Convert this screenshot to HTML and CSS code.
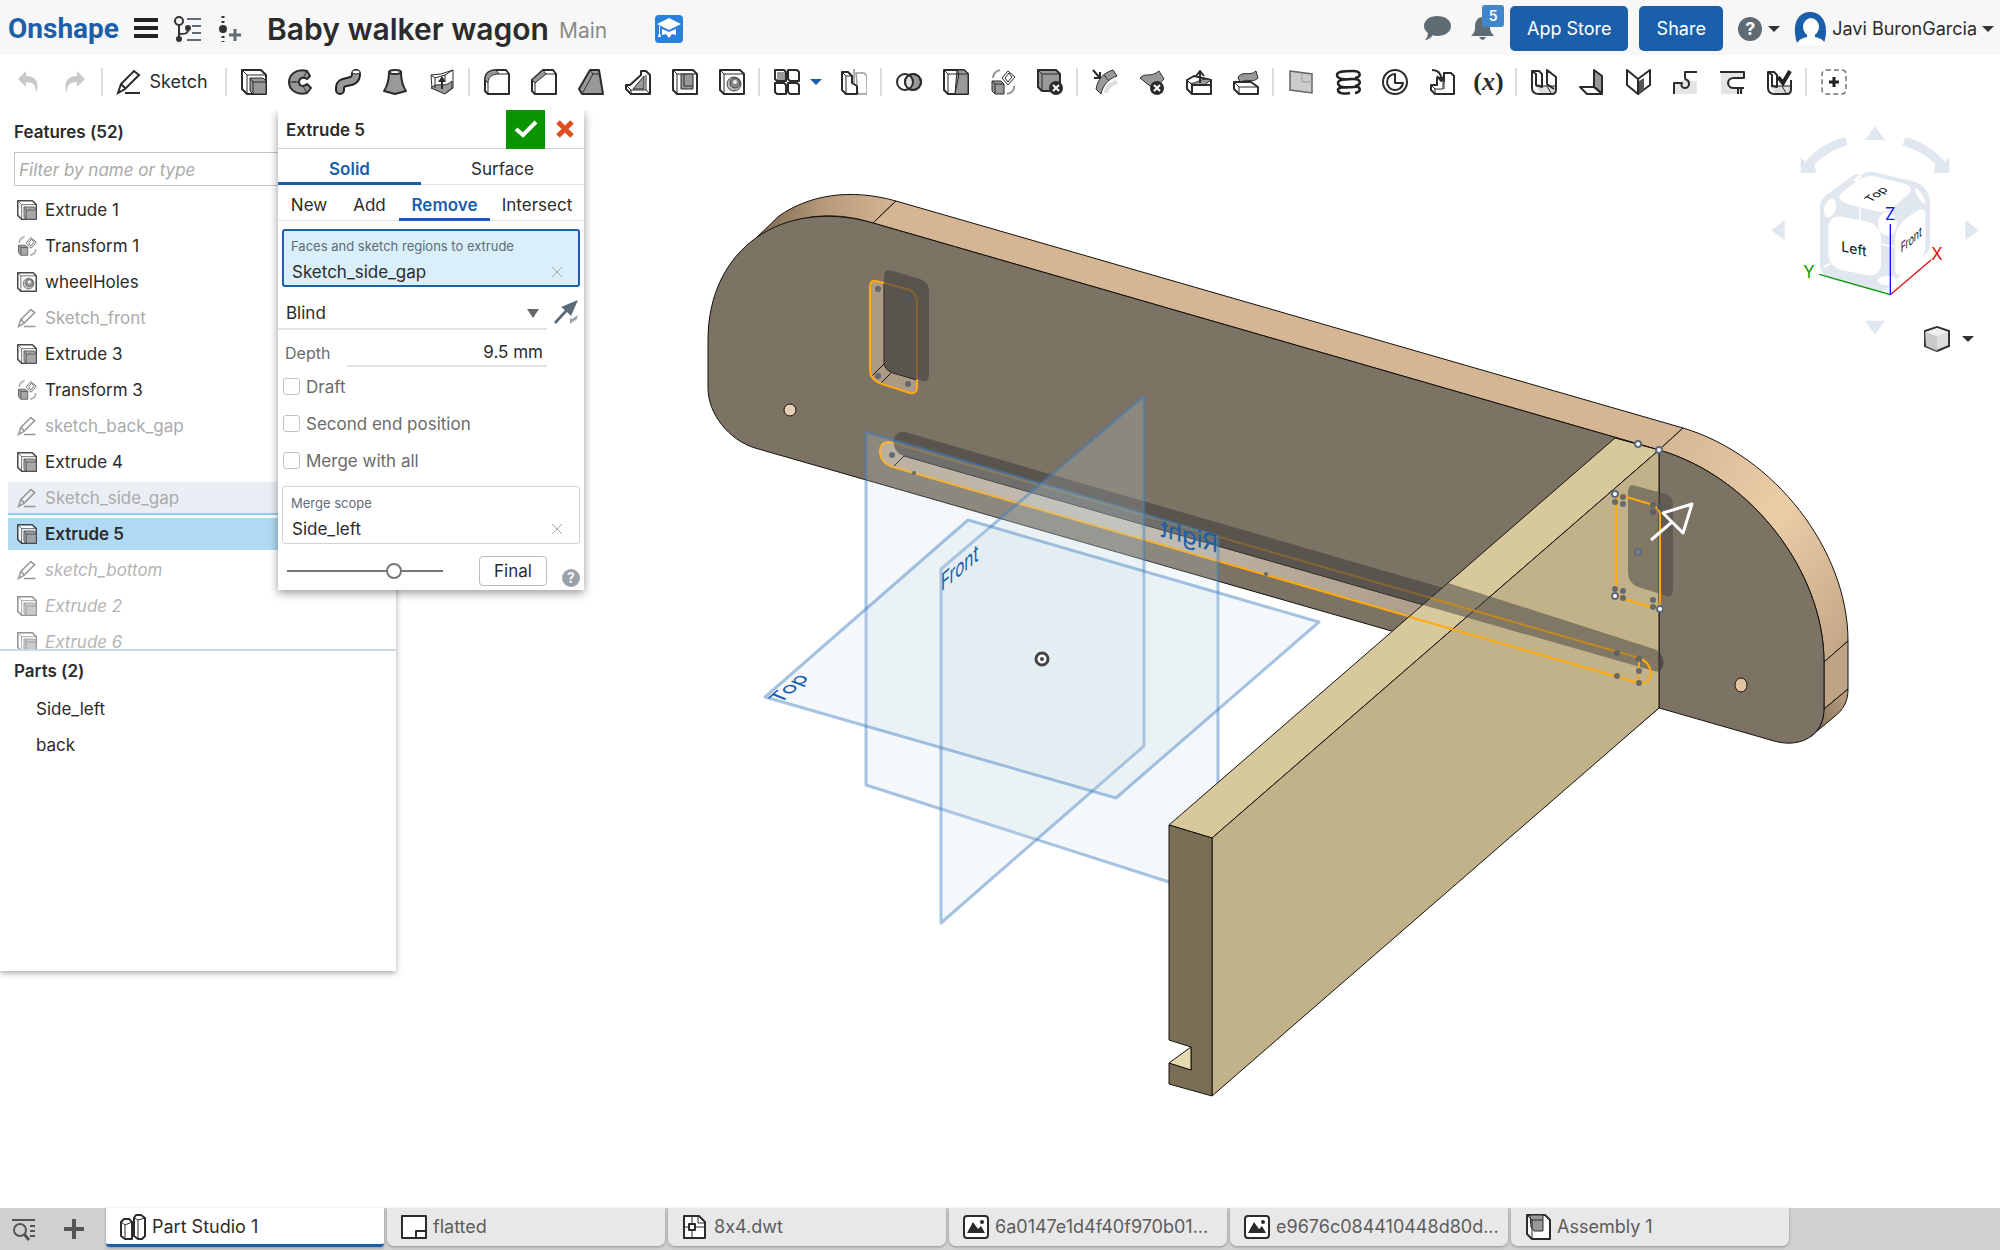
FILE: index.html
```html
<!DOCTYPE html>
<html lang="en">
<head>
<meta charset="utf-8">
<title>Baby walker wagon | Part Studio 1</title>
<link rel="stylesheet" href="styles.css">
</head>
<body>
<svg class="sprite" aria-hidden="true">
  <symbol id="i-extrude" viewBox="0 0 26 26"><path class="w l" d="M1 1h19l5 5v19H6l-5-5z"/><path class="t" d="M1 1l5 5h19M6 6v19"/><path class="g t" d="M9 9h13l3 3v13H12l-3-3z"/><path class="t" d="M9 9l3 4h13M12 13v12"/></symbol>
  <symbol id="i-revolve" viewBox="0 0 26 26"><path class="g l" d="M22 7 19 2C8-1 1 6 1 13s7 14 18 11l4-5-4-4c-5 4-8 1-8-2s3-6 8-3z"/><path class="t" d="M19 2l-4 7M19 24l-4-7M1 13h9M5 13h3"/></symbol>
  <symbol id="i-sweep" viewBox="0 0 26 26"><path d="M5 21v-2c0-10 16-2 16-14" fill="none" stroke="#222" stroke-width="10" stroke-linecap="round"/><path d="M5 21v-2c0-10 16-2 16-14" fill="none" stroke="#999" stroke-width="6" stroke-linecap="round"/><ellipse class="w t" cx="21" cy="3" rx="4" ry="2"/></symbol>
  <symbol id="i-loft" viewBox="0 0 26 26"><path class="g l" d="M7 3c0 7-1 13-5 19l11 3 11-3c-4-6-5-12-5-19z"/><ellipse class="w l" cx="13" cy="3" rx="6" ry="2"/></symbol>
  <symbol id="i-thicken" viewBox="0 0 26 26"><path class="w t" d="M2 6l10-1 12-4v18l-7 5-14-5z"/><path class="g t" d="M2 19c7-7 13 1 21-7v7l-7 6z"/><path class="t" d="M2 6l4 3 10-3 8-5M6 9v10M16 6v6"/><path class="d" d="M13 7l4 6h-3v7h-2v-7H9z"/></symbol>
  <symbol id="i-fillet" viewBox="0 0 26 26"><path class="w l" d="M1 22V11C1 4 6 1 12 1h10l3 4v20H4z"/><path class="g t" d="M1 11C1 4 6 1 12 1l3 4c-7 0-11 3-11 9z"/><path class="t" d="M15 5h10M4 14v11"/></symbol>
  <symbol id="i-chamfer" viewBox="0 0 26 26"><path class="w l" d="M1 22V11L12 1h10l3 4v20H4z"/><path class="g t" d="M1 11 12 1l3 4L4 14z"/><path class="t" d="M15 5h10M4 14v11"/></symbol>
  <symbol id="i-draft" viewBox="0 0 26 26"><path class="g l" d="M1 20 12 1h9l4 24H4z"/><path class="t" d="M12 1l3 4h7M15 5 4 25"/></symbol>
  <symbol id="i-rib" viewBox="0 0 26 26"><path class="w l" d="M16 2h5l4 4v19H6l-5-5v-4h4L16 6z"/><path class="g t" d="M19 7v13H8z"/><path class="t" d="M21 6v15H5M21 21l4 4M1 16l5 5v4"/></symbol>
  <symbol id="i-shell" viewBox="0 0 26 26"><path class="w l" d="M1 1h20l4 4v20H5l-4-4z"/><path class="t" d="M1 1l4 4h20M5 5v20"/><path class="g t" d="M9 5h12v15H9z"/><path class="t" d="M12 5v12h9"/></symbol>
  <symbol id="i-hole" viewBox="0 0 26 26"><path class="w l" d="M1 1h20l4 4v20H5l-4-4z"/><path class="t" d="M1 1l4 4h20M5 5v20"/><circle cx="15" cy="15" r="7" fill="#bbb" stroke="#444"/><circle cx="16" cy="14" r="5" fill="#888" stroke="#444"/><circle cx="16" cy="13" r="2" fill="#eee"/></symbol>
  <symbol id="i-pattern" viewBox="0 0 26 26"><path class="w l" d="M1 1h9l2 2v9H3l-2-2zM14 1h9l2 2v9h-9l-2-2zM1 14h9l2 2v9H3l-2-2zM14 14h9l2 2v9h-9l-2-2z"/><path class="g" d="M3 3h8v8H3z"/></symbol>
  <symbol id="i-mirror" viewBox="0 0 26 26"><path d="M15 4h8l3 3v18h-8l-4-6 2-5z" fill="#fff" stroke="#999" stroke-width="1.500"/><path class="w l" d="M1 3h6l4 4v7l5 3v8H5l-4-4z"/><path class="t" d="M1 3l4 4v18M5 7h6"/><path d="M13 0v14" stroke="#aaa" stroke-width="2"/></symbol>
  <symbol id="i-boolean" viewBox="0 0 26 26"><circle cx="9" cy="13" r="8" fill="#fff"/><circle class="g l" cx="17" cy="13" r="8"/><path d="M13 6a8 8 0 0 1 0 14 8 8 0 0 1 0-14z" fill="#ddd"/><circle class="l" cx="9" cy="13" r="8"/><circle class="l" cx="17" cy="13" r="8"/></symbol>
  <symbol id="i-split" viewBox="0 0 26 26"><path class="w l" d="M1 1h20l4 4v20H5l-4-4z"/><path class="g t" d="M14 1h7l4 4v20H12z"/><path class="t" d="M1 1l4 4h20M5 5v20M14 1l2 4-4 20"/></symbol>
  <symbol id="i-transform" viewBox="0 0 26 26"><path class="g t" d="M2 12h9l3 3v10H5l-3-3z"/><path class="t" d="M2 12l3 3h9M5 15v10"/><path class="w t" d="M12 9l6-7 7 6-7 8zM15 9l4-5 3 4-4 5z"/><path d="M3 9q0-6 7-8M24 17q1 6-7 8" fill="none" stroke="#999" stroke-width="2"/></symbol>
  <symbol id="i-delete" viewBox="0 0 26 26"><path class="g l" d="M1 1h18l4 4v17H5l-4-4z"/><path class="t" d="M1 1l4 4h18M5 5v17"/><circle class="d" cx="19" cy="19" r="7"/><path class="x" d="M16 16l6 6m0-6l-6 6"/></symbol>
  <symbol id="i-modify" viewBox="0 0 26 26"><path class="g t" d="M4 20C6 10 11 4 21 1l4 6C16 10 11 16 9 25z"/><path d="M12 24c1-7 5-11 12-13l2 4c-5 1-9 4-10 9z" fill="#ddd"/><path class="t" d="M12 6l5 6"/><path class="l" d="M1 1l6 7M8 3v6H2"/></symbol>
  <symbol id="i-delface" viewBox="0 0 26 26"><path class="g t" d="M1 9c6-6 11 0 19-7l5 8c-5 6-8 7-14 7z"/><circle class="d" cx="18" cy="19" r="7"/><path class="x" d="M15 16l6 6m0-6l-6 6"/></symbol>
  <symbol id="i-moveface" viewBox="0 0 26 26"><path class="w l" d="M1 11l7-4 17 4v14H6l-5-5z"/><path class="g t" d="M1 11c6 9 12-4 24 0l-7 5H6z"/><path class="l" d="M6 16h18M6 16v9M14 14V3M10 7l4-5 4 5"/></symbol>
  <symbol id="i-replace" viewBox="0 0 26 26"><path class="g t" d="M5 8c6-7 11 0 18-6l2 7c-6 6-12-1-18 5z"/><path class="w l" d="M1 13h17l7 5v7H6l-5-5z"/><path class="t" d="M1 13l5 5h19M6 18v7"/></symbol>
  <symbol id="i-plane" viewBox="0 0 26 26"><path d="M2 2l22 3v19L2 21z" fill="#ccc" stroke="#666" stroke-width="1.500"/><path d="M14 4v9h10" fill="none" stroke="#999"/></symbol>
  <symbol id="i-helix" viewBox="0 0 26 26"><path d="M20 9C27 8 26 2 18 2S2 2 2 6s8 5 14 4M20 17c7-1 6-7-1-7s-16 0-16 4 7 5 13 4M20 24c7-1 6-7-1-6s-16-1-16 3 7 4 12 3" fill="none" stroke="#222" stroke-width="2.500"/></symbol>
  <symbol id="i-curve" viewBox="0 0 26 26"><circle class="l" cx="13" cy="13" r="12"/><path class="l" d="M13 5a8 8 0 1 0 8 9h-8z"/></symbol>
  <symbol id="i-composite" viewBox="0 0 26 26"><path class="w l" d="M8 9h4l3 3V4h7l3 3v18H6l-4-4v-5h6z"/><path class="t" d="M2 16l4 4h8v-8M6 20v5M15 12v8"/><path class="l" d="M3 1q9 0 9 9M8 7l4 5 3-5"/></symbol>
  <symbol id="i-flange" viewBox="0 0 26 26"><path fill="#ddd" d="M4 16h20v8H9z"/><path class="l" d="M1 2l4 3v11l6 2V5L8 2H1v17q0 6 7 6h13q4 0 4-5V8l-9-7v14l7 5"/><path class="t" d="M5 17h19M16 17l4 7"/></symbol>
  <symbol id="i-bend" viewBox="0 0 26 26"><path class="g l" d="M16 1l8 6v17l-8-6z"/><path class="w l" d="M16 18l8 7H9l-7-7z"/></symbol>
  <symbol id="i-hem" viewBox="0 0 26 26"><path class="w l" d="M2 1l11 9v15L2 16z"/><path class="w l" d="M25 1v15l-12 9V10z"/><path d="M14 12l5-3v12l-5 3z" fill="#555"/></symbol>
  <symbol id="i-relief" viewBox="0 0 26 26"><path d="M2 14h7q3-6 9-2h7v13H2z" fill="#e5e5e5"/><path class="l" d="M2 25V14h8c-3 6 7 7 7 1s-4-3-4-6V3h12"/></symbol>
  <symbol id="i-joint" viewBox="0 0 26 26"><path d="M2 3h22v6h-7q-6 0-6 5t6 5h7v6H2z" fill="#e5e5e5"/><path class="l" d="M1 3h24v6H15c-8 0-8 10 0 10h10M19 25v-6M22 25v-6"/></symbol>
  <symbol id="i-finish" viewBox="0 0 26 26"><path fill="#ddd" d="M4 16h20v8H9z"/><path class="l" d="M2 3l4 3v11l5 1V6L8 3H2v16q0 6 7 6h12q4 0 4-5v-9"/><path class="t" d="M5 17h19M16 17l4 7"/><path d="M12 8l5 6L24 2" fill="none" stroke="#222" stroke-width="4"/></symbol>
  <symbol id="i-custom" viewBox="0 0 26 26"><rect x="1" y="1" width="24" height="24" rx="4" fill="none" stroke="#777" stroke-width="1.500" stroke-dasharray="5 3"/><path d="M13 8v10M8 13h10" stroke="#222" stroke-width="3"/></symbol>
  <symbol id="i-pencil" viewBox="0 0 26 26"><path class="p" d="M2 24 5 15 18 2l5 4L9 20zM5 15l4 4M9 24h15"/></symbol>
  <symbol id="i-image" viewBox="0 0 26 26"><rect class="w l" x="1" y="2" width="24" height="22" rx="3"/><path class="d" d="M4 19l6-11 5 7 3-3 4 7z"/><circle class="d" cx="19" cy="8" r="2"/></symbol>
</svg>

<header class="top">
  <a class="logo" href="#">Onshape</a>
  <button class="ic" aria-label="Menu"><svg width="24" height="22"><path fill="#222" d="M0 0h24v4H0zM0 8h24v4H0zM0 16h24v4H0z"/></svg></button>
  <button class="ic tree" aria-label="Versions and history"><svg width="29" height="26" viewBox="0 0 29 26"><g fill="none" stroke="#333" stroke-width="2"><circle cx="6" cy="5" r="4"/><path d="M6 9v13M6 18c8 0 9-1 9-5"/></g><circle cx="6" cy="23" r="3" fill="#333"/><circle cx="15" cy="12" r="3" fill="#333"/><path fill="#5f6b76" d="M14 2h14v2H14zM19 9h9v2h-9zM19 16h9v2h-9zM14 23h14v2H14z"/></svg></button>
  <button class="ic ver" aria-label="Create version"><svg width="24" height="26" viewBox="0 0 24 26"><path d="M5 0v26" stroke="#333" stroke-width="3" stroke-dasharray="2 3"/><circle cx="5" cy="13" r="4" fill="#333"/><path d="M17 13v12M11 19h12" stroke="#5f6b76" stroke-width="3"/></svg></button>
  <h1>Baby walker wagon</h1><span class="branch">Main</span>
  <a class="edu" href="#" aria-label="Education"><svg width="28" height="28" viewBox="0 0 28 28"><rect width="28" height="28" rx="4" fill="#2a80e0"/><path fill="#fff" d="M2 9l12-6 12 6-12 6zM7 14l7 3 7-3v6l-4-1-3 4-3-4-4 1zM4 11h1v7l1 4H3l1-4z"/></svg></a>
  <div class="right">
    <button class="ic chat" aria-label="Comments"><svg width="27" height="25" viewBox="0 0 27 25"><path fill="#5f6b73" d="M13 0c8 0 14 4 14 10s-6 10-14 10q-3 0-4-1-4 5-8 5 3-3 3-7-4-3-4-7C0 4 6 0 13 0z"/></svg></button>
    <button class="ic bell" aria-label="Notifications"><svg width="23" height="25" viewBox="0 0 23 25"><path fill="#5f6b73" d="M12 1c6 0 7 5 7 10s2 6 4 9H0c3-3 4-4 4-9S6 1 12 1zM8 21h7q-3 6-7 0z"/></svg><span class="badge">5</span></button>
    <button class="cta">App Store</button>
    <button class="cta share">Share</button>
    <button class="ic help" aria-label="Help"><span class="q">?</span><i class="caret"></i></button>
    <button class="user"><svg width="33" height="33" viewBox="0 0 33 33"><path fill="#1b5faa" d="M3 31C-3 12 4 0 16 0s20 12 14 31z"/><ellipse cx="17" cy="15" rx="8" ry="9" fill="#fff"/><path fill="#fff" d="M2 33q3-7 11-8v-4h8v4q8 1 11 8z"/></svg><span>Javi BuronGarcia</span><i class="caret"></i></button>
  </div>
</header>

<nav class="tools" aria-label="Feature tools">
  <button class="undo" aria-label="Undo"><svg width="20" height="22" viewBox="0 0 20 22"><path fill="#c9c9c9" d="M8 0v5c10 0 14 7 10 17C18 14 15 11 8 11v5L0 8z"/></svg></button>
  <button class="undo" aria-label="Redo"><svg width="20" height="22" viewBox="0 0 20 22"><path fill="#c9c9c9" d="M12 0v5C2 5-2 12 2 22c0-8 3-11 10-11v5l8-8z"/></svg></button>
  <i class="sep"></i>
  <button class="sketch"><svg class="tb"><use href="#i-pencil"/></svg>Sketch</button>
  <i class="sep"></i>
  <button aria-label="Extrude"><svg class="tb"><use href="#i-extrude"/></svg></button>
  <button aria-label="Revolve"><svg class="tb"><use href="#i-revolve"/></svg></button>
  <button aria-label="Sweep"><svg class="tb"><use href="#i-sweep"/></svg></button>
  <button aria-label="Loft"><svg class="tb"><use href="#i-loft"/></svg></button>
  <button aria-label="Thicken"><svg class="tb"><use href="#i-thicken"/></svg></button>
  <i class="sep"></i>
  <button aria-label="Fillet"><svg class="tb"><use href="#i-fillet"/></svg></button>
  <button aria-label="Chamfer"><svg class="tb"><use href="#i-chamfer"/></svg></button>
  <button aria-label="Draft"><svg class="tb"><use href="#i-draft"/></svg></button>
  <button aria-label="Rib"><svg class="tb"><use href="#i-rib"/></svg></button>
  <button aria-label="Shell"><svg class="tb"><use href="#i-shell"/></svg></button>
  <button aria-label="Hole"><svg class="tb"><use href="#i-hole"/></svg></button>
  <i class="sep"></i>
  <button aria-label="Linear pattern"><svg class="tb"><use href="#i-pattern"/></svg></button>
  <button class="drop" aria-label="More patterns"><i class="caret blue"></i></button>
  <button aria-label="Mirror"><svg class="tb"><use href="#i-mirror"/></svg></button>
  <i class="sep"></i>
  <button aria-label="Boolean"><svg class="tb"><use href="#i-boolean"/></svg></button>
  <button aria-label="Split"><svg class="tb"><use href="#i-split"/></svg></button>
  <button aria-label="Transform"><svg class="tb"><use href="#i-transform"/></svg></button>
  <button aria-label="Delete part"><svg class="tb"><use href="#i-delete"/></svg></button>
  <i class="sep"></i>
  <button aria-label="Modify fillet"><svg class="tb"><use href="#i-modify"/></svg></button>
  <button aria-label="Delete face"><svg class="tb"><use href="#i-delface"/></svg></button>
  <button aria-label="Move face"><svg class="tb"><use href="#i-moveface"/></svg></button>
  <button aria-label="Replace face"><svg class="tb"><use href="#i-replace"/></svg></button>
  <i class="sep"></i>
  <button aria-label="Plane"><svg class="tb"><use href="#i-plane"/></svg></button>
  <button aria-label="Helix"><svg class="tb"><use href="#i-helix"/></svg></button>
  <button aria-label="Curve"><svg class="tb"><use href="#i-curve"/></svg></button>
  <button aria-label="Derived"><svg class="tb"><use href="#i-composite"/></svg></button>
  <button class="var" aria-label="Variable">(<em>x</em>)</button>
  <i class="sep"></i>
  <button aria-label="Sheet metal model"><svg class="tb"><use href="#i-flange"/></svg></button>
  <button aria-label="Flange"><svg class="tb"><use href="#i-bend"/></svg></button>
  <button aria-label="Hem"><svg class="tb"><use href="#i-hem"/></svg></button>
  <button aria-label="Corner"><svg class="tb"><use href="#i-relief"/></svg></button>
  <button aria-label="Bend relief"><svg class="tb"><use href="#i-joint"/></svg></button>
  <button aria-label="Finish sheet metal"><svg class="tb"><use href="#i-finish"/></svg></button>
  <i class="sep"></i>
  <button aria-label="Add custom features"><svg class="tb"><use href="#i-custom"/></svg></button>
</nav>

<main class="stage">
  <svg class="model" viewBox="0 110 2000 1098" role="img" aria-label="Side panel and back panel with reference planes">
    <defs>
      <linearGradient id="rimL" x1="0" x2="1"><stop offset="0" stop-color="#7b6750"/><stop offset=".5" stop-color="#b89b7b"/><stop offset="1" stop-color="#d4b594"/></linearGradient>
      <linearGradient id="rimR" x1="0" y1="0" x2="1" y2="1"><stop offset="0" stop-color="#d4b594"/><stop offset=".5" stop-color="#ebcda7"/><stop offset="1" stop-color="#c0a384"/></linearGradient>
      <linearGradient id="rimB" x1="1" y1="0" x2="0" y2="1"><stop offset="0" stop-color="#c0a384"/><stop offset="1" stop-color="#7b6750"/></linearGradient>
      <linearGradient id="slot" x1="0" x2="1"><stop offset="0" stop-color="#b8a58e"/><stop offset=".3" stop-color="#c2b8aa"/><stop offset="1" stop-color="#a08c76"/></linearGradient>
    </defs>
    <g class="edge">
      <path fill="url(#rimL)" d="M756 238l23-22c30-21 71-28 117-15l-23 22q-62-20-117 15z"/>
      <path fill="#d4b594" d="M896 201l787 227-24 22-786-227z"/>
      <path fill="url(#rimR)" d="M1683 428C1774 455 1848 550 1848 641l-24 21C1824 571 1750 476 1659 450z"/>
      <path fill="#bea386" d="M1848 641v48l-24 20v-47z"/>
      <path fill="url(#rimB)" d="M1848 689c0 13-5 21-14 28l-24 20q14-9 14-28z"/>
      <path fill="#7d7364" d="M873 223L1659 450C1750 476 1824 571 1824 662v47c0 25-22 40-50 32L755 448c-26-8-47-34-47-60v-48C708 249 782 197 873 223z"/>
      <ellipse fill="#e6cdb4" cx="790" cy="410" rx="6" ry="6"/>
      <ellipse fill="#e2c4a3" cx="1741" cy="685" rx="6" ry="7"/>
    </g>
    <path fill="#ad9a84" d="M870 288q0-9 6-7l31 8q10 3 10 13v86q0 6-7 5l-28-9q-12-4-12-14z"/>
    <path fill="url(#slot)" d="M890 442L1639 658V683L893 467c-16-4-18-24-3-25z"/>
    <path fill="#7d7364" d="M884 283l23 6q10 3 10 13v78l-24-7q-9-3-9-12z"/>
    <path fill="#7d7364" d="M894 444l749 216v7L904 456q-8-3-10-12z"/>
    <g class="line"><path d="M884 283v79q0 8 9 11l24 7M872 376l12-12M881 383l10-10M904 456L1640 667M893 467l11-11"/></g>
    <g fill="none" stroke="#ffa90a" stroke-width="2">
      <path d="M870 288q0-9 6-7l31 8q10 3 10 13v86q0 6-7 5l-28-9q-12-4-12-14z"/>
      <path d="M1639 658L890 442c-15-1-13 21 3 25l746 216"/>
    </g>
    <g fill="#4b4745" fill-opacity=".7">
      <path d="M884 276q0-8 9-5l27 8q9 3 9 12v83q0 9-6 7l-30-8q-9-3-9-12z"/>
      <path d="M905 432L1654 649c13 4 12 26 0 22L904 456c-14-4-14-26 1-24z"/>
    </g>
    <g class="edge">
      <path fill="#c1b28a" d="M1659 450v258L1600 758V500z"/>
    </g>
    <g class="plane">
      <path d="M866 432l352 104v306l-49 40L866 785z"/>
      <path d="M1144 396v350L941 923V569z"/>
      <path d="M968 520l351 102-203 176-351-101z"/>
    </g>
    <g class="edge">
      <path fill="#d7c99b" d="M1615 438l44 12-447 388-43-13z"/>
      <path fill="#c1b28a" d="M1659 450v258L1212 1096V838z"/>
      <path fill="#7a6f56" d="M1169 825l43 13v258l-43-12v-21l22 7v-23l-22-7z"/>
      <path fill="#e6dab0" d="M1191 1047v23l-22-7z"/>
    </g>
    <g fill="#4b4745" fill-opacity=".55">
      <path d="M1448 583L1654 649c13 4 12 26 0 22l-231-66z"/>
      <path d="M1628 492q0-9 8-6l30 8q7 3 7 11v84q0 9-6 7l-29-9q-10-4-10-15z"/>
    </g>
    <g fill="none" stroke="#ffa90a" stroke-width="2">
      <path d="M1616 503q0-9 7-7l27 8q10 3 10 12v84q0 9-5 8l-31-9q-8-3-8-9z"/>
      <path d="M1410 617l229 66q12 1 12-10-1-11-12-15M1639 658v25"/>
      <path d="M1430 598l209 60" stroke="#c28a1d"/>
    </g>
    <g class="dot">
      <circle cx="878" cy="289" r="3"/><circle cx="908" cy="298" r="3"/><circle cx="878" cy="376" r="3"/><circle cx="908" cy="384" r="3"/><circle cx="892" cy="455" r="3"/><circle cx="914" cy="473" r="2"/><circle cx="1266" cy="574" r="2"/>
      <circle cx="1623" cy="497" r="3"/><circle cx="1623" cy="504" r="3"/><circle cx="1615" cy="502" r="3"/><circle cx="1653" cy="505" r="3"/><circle cx="1653" cy="512" r="3"/><circle cx="1660" cy="507" r="3"/><circle cx="1615" cy="589" r="3"/><circle cx="1623" cy="591" r="3"/><circle cx="1623" cy="598" r="3"/><circle cx="1653" cy="600" r="3"/><circle cx="1653" cy="607" r="3"/>
      <circle cx="1617" cy="653" r="3"/><circle cx="1617" cy="676" r="3"/><circle cx="1639" cy="659" r="3"/><circle cx="1639" cy="671" r="3"/><circle cx="1639" cy="683" r="3"/>
    </g>
    <g fill="#fff" stroke="#5d6b7c" stroke-width="2"><circle cx="1638" cy="444" r="3"/><circle cx="1659" cy="450" r="3"/><circle cx="1615" cy="494" r="3"/><circle cx="1615" cy="596" r="3"/><circle cx="1660" cy="609" r="3"/><circle cx="1638" cy="552" r="3" fill="#85847c"/></g>
    <path d="M1692 504l-29 9 20 20zM1672 522l-21 18" fill="none" stroke="#fff" stroke-width="3" stroke-linejoin="round"/>
    <circle cx="1042" cy="659" r="6" fill="#fff" stroke="#444" stroke-width="3"/><circle cx="1042" cy="659" r="2" fill="#444"/>
    <g class="plabel">
      <text transform="matrix(.64 -.55 0 1 941 592)">Front</text>
      <text transform="matrix(.7 -.62 .75 .3 780 704)">Top</text>
      <text transform="matrix(-1 -.289 0 1 1218 553)">Right</text>
    </g>
  </svg>

  <div class="viewer">
    <svg width="250" height="206" viewBox="0 60 750 618" role="img" aria-label="View cube">
      <g fill="#e0e7ee">
        <path d="M375 48l30 42h-60zM375 674l30-42h-60zM64 361l40-30v60zM686 361l-40-30v60z"/>
        <path d="M285 82l7 24q-60 18-98 56l4 27h-46v-48l14 14q48-56 119-73zM466 82l-8 24q60 18 98 56l-4 27h46v-48l-14 14q-48-56-118-73z"/>
        <path d="M340 190q10-6 30-4l120 28q46 14 50 60v130q0 20-20 34l-60 50-50 50q-20 10-46 2l-120-32q-30-12-34-40V290q0-20 20-36l80-58q10-6 20-2l-4 10z"/>
      </g>
      <g fill="#fff">
        <path d="M330 208q20-14 50-8l85 22q30 10 10 30l-45 42q-20 16-50 10l-80-20q-50-14-20-40z"/>
        <rect x="0" y="0" width="158" height="160" rx="40" transform="matrix(1 .2 0 1 235 312)"/>
        <rect x="0" y="0" width="90" height="160" rx="30" transform="matrix(1 -.75 0 1 436 350)"/>
        <ellipse cx="240" cy="294" rx="17" ry="29" transform="rotate(18 240 294)"/>
        <ellipse cx="412" cy="341" rx="29" ry="35"/><ellipse cx="412" cy="512" rx="29" ry="14"/>
        <ellipse cx="510" cy="257" rx="7" ry="28" transform="rotate(-32 510 257)"/>
        <path d="M328 292h4v50h-4zM393 400l40 8v5l-40-8zM308 212l16-16 12 4-16 16zM218 470l20-12 4 5-20 12zM512 440l12 14 6-4-12-14z"/>
      </g>
      <path d="M421 554L208 493" stroke="#009b00" stroke-width="4"/><path d="M421 554l122-104" stroke="#d11" stroke-width="4"/><path d="M421 554V342" stroke="#11f" stroke-width="4"/>
      <g class="face"><text transform="matrix(1 .2 0 1 274 424)">Left</text><text transform="matrix(.62 -.52 0 1 452 430)">Front</text><text transform="matrix(.72 -.52 .75 .4 362 278)">Top</text></g>
      <g class="axis"><text x="405" y="330" fill="#11f">Z</text><text x="160" y="503" fill="#009b00">Y</text><text x="544" y="451" fill="#d11">X</text></g>
    </svg>
    <button class="shade" aria-label="Display style"><svg width="26" height="26" viewBox="0 0 26 26"><path fill="#ddd" stroke="#333" stroke-width="2" d="M1 5l12-4 12 4v15l-12 5-12-5z"/><path d="M1 6l12 4v15L2 20z" fill="#c9c9c9"/><path d="M2 6l11-4 11 4-11 4z" fill="#eee"/></svg><i class="caret"></i></button>
  </div>

  <aside class="features">
    <h2>Features (52)</h2>
    <input class="filter" type="text" aria-label="Filter features" placeholder="Filter by name or type">
    <ul class="list">
      <li><svg><use href="#i-extrude"/></svg>Extrude 1</li>
      <li><svg><use href="#i-transform"/></svg>Transform 1</li>
      <li><svg><use href="#i-hole"/></svg>wheelHoles</li>
      <li class="hid"><svg><use href="#i-pencil"/></svg>Sketch_front</li>
      <li><svg><use href="#i-extrude"/></svg>Extrude 3</li>
      <li><svg><use href="#i-transform"/></svg>Transform 3</li>
      <li class="hid"><svg><use href="#i-pencil"/></svg>sketch_back_gap</li>
      <li><svg><use href="#i-extrude"/></svg>Extrude 4</li>
      <li class="hid hover"><svg><use href="#i-pencil"/></svg>Sketch_side_gap</li>
      <li class="active"><svg><use href="#i-extrude"/></svg>Extrude 5</li>
      <li class="hid off"><svg><use href="#i-pencil"/></svg>sketch_bottom</li>
      <li class="hid off"><svg class="dim"><use href="#i-extrude"/></svg>Extrude 2</li>
      <li class="hid off"><svg class="dim"><use href="#i-extrude"/></svg>Extrude 6</li>
    </ul>
    <section class="parts">
      <h2>Parts (2)</h2>
      <ul><li>Side_left</li><li>back</li></ul>
    </section>
  </aside>

  <form class="dialog">
    <div class="dhead"><h2>Extrude 5</h2>
      <button type="button" class="ok" aria-label="Accept"><svg width="24" height="18" viewBox="0 0 24 18"><path d="M2 9l7 6L22 2" fill="none" stroke="#fff" stroke-width="4"/></svg></button>
      <button type="button" class="no" aria-label="Cancel"><svg width="18" height="18" viewBox="0 0 18 18"><path d="M2 2l14 14M16 2L2 16" stroke="#df4d20" stroke-width="5"/></svg></button>
    </div>
    <div class="seg two"><button type="button" class="on">Solid</button><button type="button">Surface</button></div>
    <div class="seg four"><button type="button">New</button><button type="button">Add</button><button type="button" class="on">Remove</button><button type="button">Intersect</button></div>
    <div class="pick on"><span>Faces and sketch regions to extrude</span><div>Sketch_side_gap<button type="button" aria-label="Remove Sketch_side_gap"><svg width="12" height="12"><path d="M1 1l10 10M11 1L1 11" stroke="#a3acb3"/></svg></button></div></div>
    <div class="end"><select aria-label="End type"><option>Blind</option></select><i class="caret tall"></i><button type="button" aria-label="Opposite direction"><svg width="26" height="26" viewBox="0 0 26 26"><path fill="#5c6a76" d="M25 1l-7 16-4-4L3 25l-2-2L12 11 8 8z"/><path fill="#98a2aa" d="M25 16l-2 6-1-1-5 4v-6l2 1z"/></svg></button></div>
    <div class="depth"><label for="depth">Depth</label><input id="depth" type="text" value="9.5 mm"></div>
    <label class="chk"><input type="checkbox">Draft</label>
    <label class="chk"><input type="checkbox">Second end position</label>
    <label class="chk"><input type="checkbox">Merge with all</label>
    <div class="pick scope"><span>Merge scope</span><div>Side_left<button type="button" aria-label="Remove Side_left"><svg width="12" height="12"><path d="M1 1l10 10M11 1L1 11" stroke="#a3acb3"/></svg></button></div></div>
    <div class="dfoot"><input type="range" min="0" max="100" value="71" aria-label="Preview"><button type="button" class="final">Final</button><button type="button" class="q small" aria-label="Help">?</button></div>
  </form>
</main>

<footer class="tabs">
  <button class="find" aria-label="Tab manager"><svg width="24" height="24" viewBox="0 0 24 24"><g fill="none" stroke="#555" stroke-width="2"><path d="M0 3h23M18 9h5M18 14h5M18 19h5"/><circle cx="8" cy="13" r="6"/><path d="M12 17l5 6" stroke-width="3"/></g></svg></button>
  <button class="plus" aria-label="Insert new tab"><svg width="20" height="20"><path d="M10 0v20M0 10h20" stroke="#555" stroke-width="4"/></svg></button>
  <a class="tab cur" href="#"><svg viewBox="0 0 26 26"><path class="w l" d="M1 8l3-3h5l3 3v17H5l-4-3zM14 4l2-3h5l4 3v18l-3 3h-4l-4-3z"/><path class="t" d="M1 8l4 3v14M5 11l7-3M14 4l4 2v19M18 6l7-2"/></svg><span>Part Studio 1</span></a>
  <a class="tab" href="#"><svg viewBox="0 0 26 26"><path class="w l" d="M1 2h24v22H1zM15 24v-7h10"/></svg><span>flatted</span></a>
  <a class="tab" href="#"><svg viewBox="0 0 26 26"><path class="w l" d="M2 2h15l6 6v16H2z"/><path class="t" d="M16 2v7h7M2 13h5M13 13h10M10 16v8M10 2v8"/><path class="w l" d="M7 10h6v6H7z"/></svg><span>8x4.dwt</span></a>
  <a class="tab" href="#"><svg><use href="#i-image"/></svg><span>6a0147e1d4f40f970b01...</span></a>
  <a class="tab" href="#"><svg><use href="#i-image"/></svg><span>e9676c084410448d80d...</span></a>
  <a class="tab" href="#"><svg viewBox="0 0 26 26"><path class="w l" d="M2 1h18l5 5v19H7l-5-5z"/><path class="g t" d="M5 1h13v16H9l-3-4z"/><path class="t" d="M2 1l5 5h11M7 6v19"/></svg><span>Assembly 1</span></a>
</footer>
</body>
</html>
```
FILE: styles.css
```css
* { box-sizing: border-box; }
body { margin: 0; min-height: 100vh; display: flex; flex-direction: column; background: #fff; color: #2b2b2b; font: 17px/24px Inter, "Liberation Sans", sans-serif; font-feature-settings: "calt" 0; }
button, input, select { font: inherit; font-feature-settings: inherit; color: inherit; }
button { background: none; border: 0; padding: 0; display: flex; align-items: center; justify-content: center; }
a { color: inherit; text-decoration: none; }
ul { list-style: none; margin: 0; padding: 0; }
h1, h2 { margin: 0; }
svg { display: block; flex: none; }
.sprite { width: 0; height: 0; position: absolute; }
.w { fill: #fff; }
.g { fill: #999; }
.d { fill: #2b2b2b; }
.l { stroke: #2b2b2b; stroke-width: 2; stroke-linejoin: round; }
.l:not(.w):not(.g) { fill: none; }
.t { stroke: #2b2b2b; stroke-width: 1; }
.t:not(.w):not(.g) { fill: none; }
.x { stroke: #fff; stroke-width: 2; fill: none; }
.p { fill: none; stroke: currentColor; stroke-width: 2; }
.caret { border: 6px solid transparent; border-top: 6px solid #333; border-bottom: 0; }
.caret.blue { border-top-color: #1b5faa; }

.top { height: 55px; flex: none; background: #f7f7f7; display: flex; align-items: center; padding: 2px 6px 0 8px; font-size: 18px; }
.logo { font: bold 28px/40px Roboto, sans-serif; color: #1b5faa; width: 126px; }
.tree { margin-left: 15px; }
.ver { margin-left: 16px; }
h1 { font-size: 30px; line-height: 40px; font-weight: 600; margin-left: 25px; }
.branch { font-size: 21px; color: #8a8a8a; margin: 4px 0 0 10px; }
.edu { margin-left: 48px; }
.right { margin-left: auto; display: flex; align-items: center; }
.bell { margin-left: 20px; position: relative; }
.badge { position: absolute; left: 11px; top: -11px; width: 22px; height: 22px; border-radius: 3px; background: #3f86cb; color: #fff; font-size: 14px; line-height: 22px; font-weight: 600; }
.cta { height: 45px; width: 118px; margin-left: 16px; border-radius: 5px; background: #1b5faa; color: #fff; }
.share { width: 84px; margin-left: 11px; }
.q { width: 24px; height: 24px; border-radius: 50%; background: #5f6b73; color: #f7f7f7; font-weight: 700; font-size: 18px; line-height: 24px; text-align: center; }
.help { margin-left: 15px; gap: 6px; }
.user { margin-left: 14px; gap: 5px; }

.tools { height: 55px; flex: none; display: flex; align-items: center; padding: 0 8px 2px 4px; font-size: 18px; }
.tools button { width: 47px; height: 40px; flex: none; }
.tools .drop { width: 20px; }
.tools .drop .caret { margin-right: 8px; }
.tools .sketch { width: 116px; gap: 7px; padding-right: 4px; }
.tools .var { font: bold 26px/30px "Liberation Serif", serif; }
.tb { width: 26px; height: 26px; }
.sep { width: 2px; height: 28px; margin: 0 3px; background: #dcdcdc; flex: none; }

.stage { flex: 1; display: grid; grid-template-columns: minmax(0, 1fr); grid-template-rows: minmax(0, 1fr); overflow: hidden; }
.stage > * { grid-area: 1 / 1; }
.model { width: 100%; height: 100%; }
.edge { stroke: #14120f; stroke-width: 1; }
.line { stroke: #14120f; fill: none; }
.plane { fill: rgba(200, 218, 232, .2); stroke: rgba(62, 124, 194, .45); stroke-width: 3; stroke-linejoin: round; }
.dot { fill: #4f5a66; fill-opacity: .8; }
.plabel { font-size: 24px; fill: #1b5faa; }
.face { font-size: 42px; fill: #111; }
.axis { font-size: 50px; }

.viewer { justify-self: end; align-self: start; margin-top: 20px; }
.viewer > svg { overflow: visible; }
.shade { margin: -10px 0 0 174px; gap: 12px; }

.features { align-self: start; width: 396px; height: 861px; background: #fff; box-shadow: 0 2px 6px rgba(0, 0, 0, .35); }
.features h2 { font-size: 17px; line-height: 24px; font-weight: 600; padding: 10px 14px 8px; }
.filter { display: block; width: 368px; height: 34px; margin-left: 14px; border: 1px solid #c6c6c6; padding: 2px 4px 0; font-style: italic; }
.filter::placeholder { color: #a9a9a9; }
.list { height: 457px; overflow: hidden; margin-top: 6px; }
.list li { height: 36px; padding-left: 9px; margin-left: 8px; display: flex; align-items: center; gap: 8px; }
.list svg { width: 20px; height: 20px; opacity: .85; }
.list .hid { color: #aaa; }
.list .hid svg { color: #888; }
.list .off { font-style: italic; color: #b5b5b5; }
.list .dim { opacity: .5; }
.list .hover { background: #eaeff5; height: 33px; margin-top: 2px; border-bottom: 2px solid #90cdf2; }
.list .active { background: #b0daf4; height: 32px; margin-top: 3px; margin-bottom: 2px; font-weight: 600; }
.parts { border-top: 2px solid #cfd9e2; }
.parts h2 { padding: 8px 14px; }
.parts li { padding-left: 36px; line-height: 36px; }

.dialog { align-self: start; width: 306px; height: 480px; margin-left: 278px; background: #fff; box-shadow: 0 3px 9px rgba(0, 0, 0, .4); }
.dhead { height: 39px; display: flex; align-items: center; border-bottom: 1px solid #cfd4d8; }
.dhead h2 { flex: 1; font-size: 17px; font-weight: 600; padding: 2px 0 0 8px; }
.ok { width: 39px; height: 39px; background: #0a9400; }
.no { width: 39px; height: 39px; }
.seg { height: 36px; display: flex; border-bottom: 1px solid #e3e3e3; }
.seg button { height: 36px; border-bottom: 3px solid transparent; padding-top: 6px; }
.seg .on { color: #1b5faa; font-weight: 600; border-bottom-color: #1b5faa; }
.two button { width: 143px; }
.two button + button { width: 163px; }
.four button { width: 62px; }
.four button + button { width: 59px; }
.four .on.on { width: 91px; }
.four .on + button { width: 94px; }
.pick { margin: 8px 4px 0; height: 58px; border: 1px solid #cfd4d8; border-radius: 3px; padding: 4px 16px 0 8px; }
.pick.on { border: 2px solid #1b5faa; background: #d9eff9; padding: 3px 15px 0 7px; }
.pick span { display: block; font-size: 13px; color: #5f6b76; }
.pick div { display: flex; align-items: center; justify-content: space-between; line-height: 28px; padding-left: 1px; }
.end { display: flex; align-items: center; height: 43px; }
.end select { appearance: none; width: 269px; height: 43px; border: 0; border-bottom: 2px solid #e3e3e3; background: none; padding: 10px 8px 0; }
.end .caret { margin: 10px 0 0 -20px; }
.end button { margin: 6px 0 0 14px; }
.tall { border-top: 9px solid #666; }
.depth { display: flex; align-items: center; height: 38px; padding: 0 37px 0 7px; color: #6b6b6b; }
.depth label { width: 62px; font-size: 16px; padding-top: 8px; }
.depth input { flex: 1; min-width: 0; height: 36px; border: 0; border-bottom: 2px solid #e3e3e3; text-align: right; color: #2b2b2b; padding: 8px 4px 0; }
.chk { display: flex; align-items: center; height: 37px; padding-left: 5px; gap: 6px; color: #6b6b6b; }
.chk input { appearance: none; width: 17px; height: 17px; margin: 0; border: 1px solid #c2c2c2; border-radius: 3px; }
.scope { margin-top: 7px; }
.dfoot { display: flex; align-items: center; padding: 11px 4px 0 9px; }
.dfoot input { appearance: none; width: 156px; height: 17px; margin: 0; background: linear-gradient(#777, #777) center / 100% 2px no-repeat; }
.dfoot input::-webkit-slider-thumb { appearance: none; width: 16px; height: 16px; border-radius: 50%; background: #fff; border: 2px solid #777; }
.final { width: 68px; height: 30px; margin-left: 36px; border: 1px solid #bbb; border-radius: 4px; }
.small { width: 18px; height: 18px; margin: 14px 0 0 15px; font-size: 14px; background: #9aa1a7; }

.tabs { height: 42px; flex: none; background: #d0d0d0; display: flex; align-items: flex-start; gap: 3px; color: #5c5c5c; }
.find { width: 43px; height: 42px; padding-left: 4px; }
.plus { width: 57px; height: 42px; padding-right: 1px; }
.tab { flex: 0 1 278px; height: 38px; background: #e8e8e8; border-radius: 0 0 7px 7px; box-shadow: 0 1px 3px rgba(0, 0, 0, .3); display: flex; align-items: center; gap: 6px; padding-left: 14px; font-size: 18px; white-space: nowrap; overflow: hidden; }
.tab svg { width: 26px; height: 26px; }
.cur { background: #fff; color: #2b2b2b; height: 39px; padding-top: 2px; border-bottom: 3px solid #1b5faa; border-radius: 0 0 4px 4px; }
```
